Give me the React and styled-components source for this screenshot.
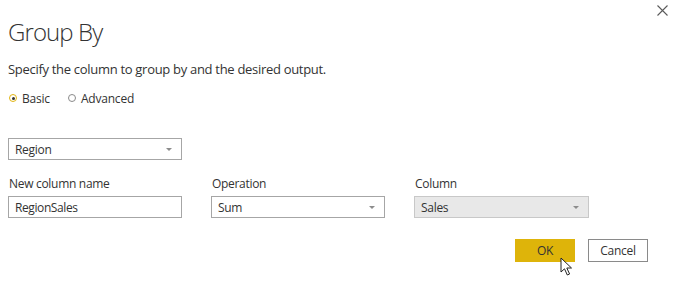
import React from 'react';
import styled, { createGlobalStyle } from 'styled-components';

const GlobalStyle = createGlobalStyle`
  html, body {
    margin: 0;
    padding: 0;
    background: #ffffff;
  }
  body {
    font-family: "Open Sans", "Noto Sans", sans-serif;
    color: #333333;
  }
`;

const Dialog = styled.div`
  position: relative;
  width: 676px;
  height: 282px;
  box-sizing: border-box;
  padding: 15px 0 0 8px;
  background: #fff;
  overflow: hidden;
`;

const Close = styled.button`
  position: absolute;
  top: 4px;
  right: 8px;
  width: 12px;
  height: 12px;
  padding: 0;
  border: none;
  background: none;
  display: flex;
  align-items: center;
  justify-content: center;
`;

const Title = styled.h1`
  margin: 0;
  font-size: 24px;
  font-weight: 300;
  line-height: 34px;
  color: #333;
  letter-spacing: -0.9px;
`;

const Subtitle = styled.p`
  margin: 11px 0 0;
  font-size: 13px;
  line-height: 18px;
  color: #333;
  letter-spacing: -0.3px;
`;

const RadioRow = styled.div`
  display: flex;
  align-items: center;
  gap: 17px;
  margin-top: 12px;
  height: 16px;
`;

const RadioOption = styled.label`
  display: flex;
  align-items: center;
  gap: 5px;
  font-size: 12px;
  color: #333;
  letter-spacing: -0.2px;
`;

const RadioDot = styled.span`
  width: 6px;
  height: 6px;
  border-radius: 50%;
  border: 1.5px solid ${p => (p.$checked ? '#e2b511' : '#8a8a8a')};
  display: flex;
  align-items: center;
  justify-content: center;
  margin-left: 1px;
  &::after {
    content: '';
    width: 3px;
    height: 3px;
    border-radius: 50%;
    background: ${p => (p.$checked ? '#333' : 'transparent')};
  }
`;

const Select = styled.div`
  width: ${p => p.$width || 174}px;
  height: 22px;
  box-sizing: border-box;
  border: 1px solid ${p => (p.$disabled ? '#c8c8c8' : '#a6a6a6')};
  background: ${p => (p.$disabled ? '#e8e8e8' : '#fff')};
  display: flex;
  align-items: center;
  justify-content: space-between;
  padding: 0 9px 0 6px;
  font-size: 12px;
  letter-spacing: -0.3px;
  color: #333;
`;

const Caret = styled.span`
  width: 0;
  height: 0;
  border-left: 3px solid transparent;
  border-right: 3px solid transparent;
  border-top: 3px solid #8c8c8c;
`;

const GroupSelect = styled.div`
  margin-top: 32px;
`;

const Fields = styled.div`
  display: grid;
  grid-template-columns: 174px 174px 175px;
  column-gap: 29px;
  margin-top: 16px;
`;

const Field = styled.div`
  display: flex;
  flex-direction: column;
  gap: 4px;
`;

const Label = styled.span`
  font-size: 12px;
  line-height: 16px;
  color: #333;
  padding-left: 1px;
  letter-spacing: -0.3px;
`;

const TextInput = styled.div`
  width: 174px;
  height: 22px;
  box-sizing: border-box;
  border: 1px solid #a6a6a6;
  display: flex;
  align-items: center;
  padding: 0 6px;
  font-size: 12px;
  letter-spacing: -0.4px;
  color: #333;
`;

const Actions = styled.div`
  display: flex;
  justify-content: flex-end;
  gap: 13px;
  margin-top: 21px;
  padding-right: 28px;
`;

const Button = styled.button`
  position: relative;
  width: 60px;
  height: 23px;
  box-sizing: border-box;
  font-family: inherit;
  font-size: 12px;
  letter-spacing: -0.3px;
  color: #333;
  border: 1px solid ${p => (p.$primary ? '#deb40a' : '#8a8a8a')};
  background: ${p => (p.$primary ? '#deb40a' : '#fff')};
  padding: 0;
`;

const Pointer = styled.svg`
  position: absolute;
  left: 44px;
  top: 17px;
`;

export default function App() {
  return (
    <>
      <GlobalStyle />
      <Dialog>
        <Close aria-label="Close">
          <svg width="11" height="11" viewBox="0 0 11 11">
            <path d="M0.5 0.5 L10.5 10.5 M10.5 0.5 L0.5 10.5" stroke="#5a5a5a" strokeWidth="1.1" />
          </svg>
        </Close>
        <Title>Group By</Title>
        <Subtitle>Specify the column to group by and the desired output.</Subtitle>
        <RadioRow>
          <RadioOption><RadioDot $checked />Basic</RadioOption>
          <RadioOption><RadioDot />Advanced</RadioOption>
        </RadioRow>
        <GroupSelect>
          <Select>Region<Caret /></Select>
        </GroupSelect>
        <Fields>
          <Field>
            <Label>New column name</Label>
            <TextInput>RegionSales</TextInput>
          </Field>
          <Field>
            <Label>Operation</Label>
            <Select>Sum<Caret /></Select>
          </Field>
          <Field>
            <Label>Column</Label>
            <Select $disabled $width={175}>Sales<Caret /></Select>
          </Field>
        </Fields>
        <Actions>
          <Button $primary>
            OK
            <Pointer width="14" height="20" viewBox="0 0 14 20">
              <path d="M1 1 L1 15 L4.5 11.8 L7.3 18 L9.6 17 L6.8 11 L11.5 11 Z" fill="#fff" stroke="#222" strokeWidth="1" strokeLinejoin="round" />
            </Pointer>
          </Button>
          <Button>Cancel</Button>
        </Actions>
      </Dialog>
    </>
  );
}
